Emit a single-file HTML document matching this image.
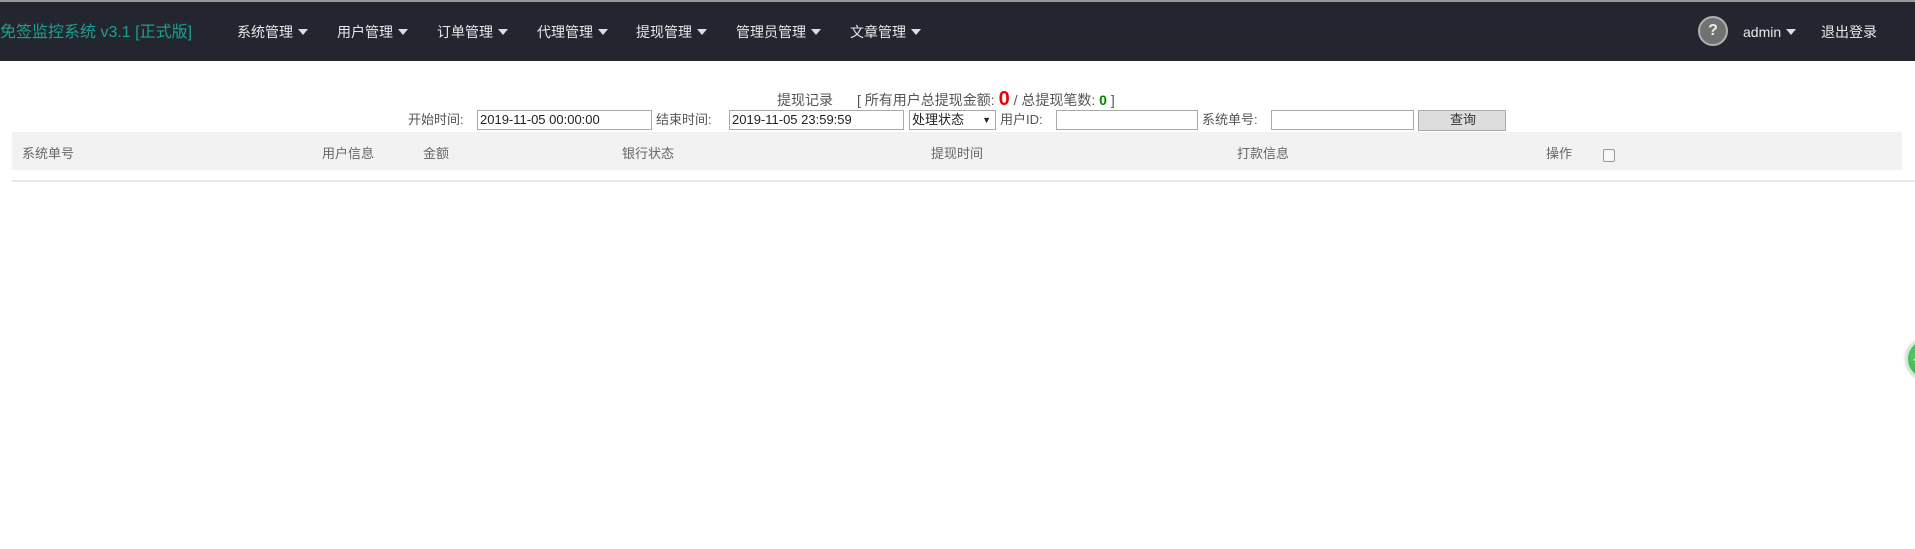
<!DOCTYPE html>
<html><head><meta charset="utf-8"><style>
*{margin:0;padding:0;box-sizing:border-box}
body{width:1915px;height:549px;background:#fff;position:relative;overflow:hidden;font-family:"Liberation Sans","Noto Sans CJK SC",sans-serif;color:#666;font-size:14px}
.a{position:absolute;white-space:nowrap}
#top{position:absolute;left:0;top:0;width:1915px;height:2px;background:#9a9a9a}
#nav{position:absolute;left:0;top:2px;width:1915px;height:59px;background:#23262e}
.m{position:absolute;top:21px;color:#e8e8e8;font-size:14px;line-height:18px}
.m:after{content:"";display:inline-block;margin-left:5px;vertical-align:2px;border-left:5px solid transparent;border-right:5px solid transparent;border-top:6px solid #ddd}
.m:last-child:after{display:none}
.in{position:absolute;top:110px;height:20px;border:1px solid #a9a9a9;background:#fff;font-size:13px;color:#222;padding-left:2px;line-height:18px}
.lb{position:absolute;top:112px;font-size:13px;color:#555;line-height:16px}
.th{position:absolute;top:143px;font-size:13px;color:#666}
</style></head><body>
<div id="top"></div>
<div id="nav">
<div class="a" style="left:0;top:16px;color:#1aa094;font-size:16px">免签监控系统 v3.1 [正式版]</div>
<div class="m" style="left:237px">系统管理</div>
<div class="m" style="left:337px">用户管理</div>
<div class="m" style="left:437px">订单管理</div>
<div class="m" style="left:537px">代理管理</div>
<div class="m" style="left:636px">提现管理</div>
<div class="m" style="left:736px">管理员管理</div>
<div class="m" style="left:850px">文章管理</div>
<div class="a" style="left:1698px;top:14px;width:30px;height:30px;border-radius:50%;background:#6f7272;border:2px solid #b0b0b0;color:#eee;font-weight:bold;font-size:16px;text-align:center;line-height:26px">?</div>
<div class="m" style="left:1743px">admin</div>
<div class="m" style="left:1821px;">退出登录</div>
</div>
<div class="a" style="left:777px;top:90px;font-size:14px;color:#555">提现记录</div>
<div class="a" style="left:857px;top:88px;font-size:14px;color:#555">[ 所有用户总提现金额: <span style="color:#e00;font-size:20px;font-weight:bold">0</span> / 总提现笔数: <span style="color:#080;font-weight:bold">0</span> ]</div>
<div class="lb" style="left:408px">开始时间:</div>
<div class="in" style="left:477px;width:175px">2019-11-05 00:00:00</div>
<div class="lb" style="left:656px">结束时间:</div>
<div class="in" style="left:729px;width:175px">2019-11-05 23:59:59</div>
<div class="in" style="left:909px;width:87px">处理状态<span style="position:absolute;right:4px;font-size:9px">▼</span></div>
<div class="lb" style="left:1000px">用户ID:</div>
<div class="in" style="left:1056px;width:142px"></div>
<div class="lb" style="left:1202px">系统单号:</div>
<div class="in" style="left:1271px;width:143px"></div>
<div class="in" style="left:1418px;width:88px;height:21px;background:#ddd;text-align:center;color:#333">查询</div>
<div class="a" style="left:12px;top:132px;width:1890px;height:38px;background:#f2f2f2"></div>
<div class="th" style="left:22px">系统单号</div>
<div class="th" style="left:322px">用户信息</div>
<div class="th" style="left:423px">金额</div>
<div class="th" style="left:622px">银行状态</div>
<div class="th" style="left:931px">提现时间</div>
<div class="th" style="left:1237px">打款信息</div>
<div class="th" style="left:1546px">操作</div>
<div class="a" style="left:1603px;top:149px;width:12px;height:13px;border:1px solid #999;border-radius:2px;background:#f8f8f8"></div>
<div class="a" style="left:12px;top:180px;width:1903px;height:2px;background:#e8e8e8"></div>
<div class="a" style="left:1906px;top:338px;width:42px;height:42px;border-radius:50%;background:radial-gradient(circle at 40% 40%,#5fd36f,#2ea843);border:2px solid #cfe9d3;box-shadow:0 0 3px #aaa;color:#fff;font-size:11px;font-weight:bold;line-height:38px;padding-left:6px">41</div>
</body></html>
